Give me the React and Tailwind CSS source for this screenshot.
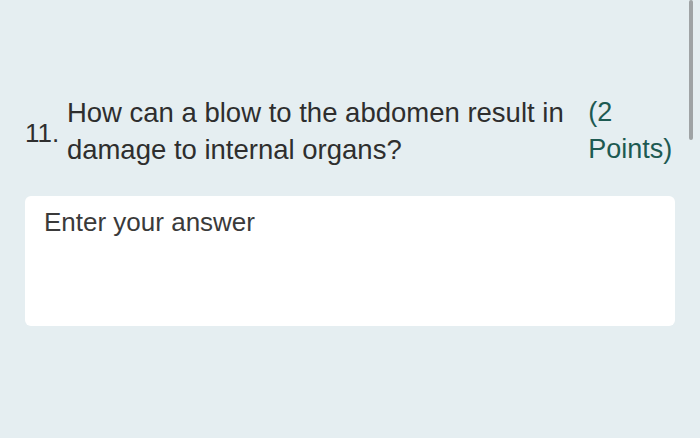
import React from 'react';

const font = { fontFamily: '"Liberation Sans", Arial, sans-serif' };

export default function App() {
  return (
    <div
      className="relative w-[700px] h-[438px] overflow-hidden bg-[#e5eef1] pl-[25px] pr-[25px] pt-[94px]"
      style={font}
    >
      {/* scrollbar */}
      <div className="absolute right-[7px] top-0 w-[4px] h-[140px] rounded-full bg-[#9fa3a5]" />

      <div className="flex items-center">
        <div className="w-[42px] pt-[4px] text-[26px] leading-[37px] text-[#2e2e2e]">11.</div>
        <div className="w-[522px] text-[27.5px] leading-[37px] text-[#2e2e2e]">
          How can a blow to the abdomen result in damage to internal organs?
        </div>
        <div className="w-[88px] pl-[1px] text-[27px] leading-[37px] text-[#1d5a52]">
          (2<br />Points)
        </div>
      </div>

      <div className="mt-[28px] h-[130px] rounded-[6px] bg-white pl-[19px] pt-[11px]">
        <div className="text-[26px] leading-[30px] text-[#3a3a3a]">Enter your answer</div>
      </div>
    </div>
  );
}
